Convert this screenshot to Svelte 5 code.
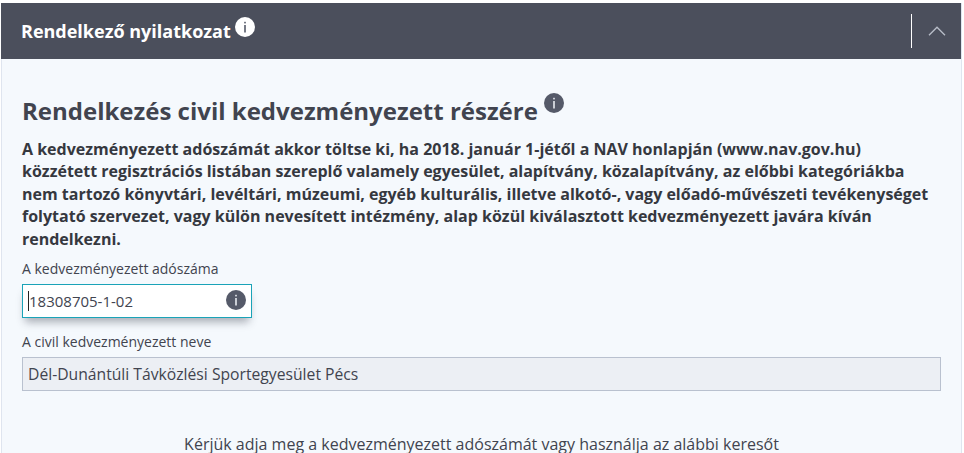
<script>
	const intro =
		'A kedvezményezett adószámát akkor töltse ki, ha 2018. január 1-jétől a NAV honlapján (www.nav.gov.hu) közzétett regisztrációs listában szereplő valamely egyesület, alapítvány, közalapítvány, az előbbi kategóriákba nem tartozó könyvtári, levéltári, múzeumi, egyéb kulturális, illetve alkotó-, vagy előadó-művészeti tevékenységet folytató szervezet, vagy külön nevesített intézmény, alap közül kiválasztott kedvezményezett javára kíván rendelkezni.';
</script>

<div class="page">
	<div class="panel">
		<header class="panel-head">
			<div class="panel-title">
				<span>Rendelkező nyilatkozat</span>
				<svg class="info head-info" viewBox="0 0 20 20" aria-hidden="true">
					<circle cx="10" cy="10" r="10" fill="#fff" />
					<rect x="9.2" y="8" width="1.6" height="7.5" fill="#555a69" />
					<rect x="9.2" y="4.8" width="1.6" height="1.6" fill="#555a69" />
				</svg>
			</div>
			<div class="toggle">
				<svg viewBox="0 0 18 10" width="18" height="10" aria-hidden="true">
					<path d="M1 9.2 9 1.2l8 8" fill="none" stroke="#b9bec9" stroke-width="1.3" />
				</svg>
			</div>
		</header>

		<div class="panel-body">
			<h2>
				<span>Rendelkezés civil kedvezményezett részére</span>
				<svg class="info" viewBox="0 0 20 20" aria-hidden="true">
					<circle cx="10" cy="10" r="10" fill="#555a69" />
					<rect x="9.2" y="8" width="1.6" height="7.5" fill="#e8ebf0" />
					<rect x="9.2" y="4.8" width="1.6" height="1.6" fill="#e8ebf0" />
				</svg>
			</h2>
			<p class="intro">{intro}</p>

			<div class="field">
				<div class="label">A kedvezményezett adószáma</div>
				<div class="input active">
					<span class="caret"></span>
					<span>18308705-1-02</span>
					<svg class="info input-info" viewBox="0 0 20 20" aria-hidden="true">
						<circle cx="10" cy="10" r="10" fill="#555a69" />
						<rect x="9.2" y="8" width="1.6" height="7.5" fill="#e8ebf0" />
						<rect x="9.2" y="4.8" width="1.6" height="1.6" fill="#e8ebf0" />
					</svg>
				</div>
			</div>

			<div class="field name-field">
				<div class="label">A civil kedvezményezett neve</div>
				<div class="input readonly">Dél-Dunántúli Távközlési Sportegyesület Pécs</div>
			</div>

			<p class="hint">Kérjük adja meg a kedvezményezett adószámát vagy használja az alábbi keresőt</p>
		</div>
	</div>
</div>

<style>
	:global(body) {
		margin: 0;
		background: #fff;
		overflow: hidden;
	}
	.page {
		width: 964px;
		height: 453px;
		padding: 3px 2px 0 1px;
		box-sizing: border-box;
		font-family: 'Open Sans', sans-serif;
		color: #41444f;
		overflow: hidden;
	}
	.panel {
		height: 100%;
		display: flex;
		flex-direction: column;
		background: #f5f9fd;
		border-right: 1px solid #dfe5ef;
	}
	.panel-head {
		flex: none;
		height: 56px;
		background: #4b4f5c;
		color: #fff;
		display: flex;
		align-items: center;
		justify-content: space-between;
	}
	.panel-title {
		display: flex;
		align-items: flex-start;
		gap: 4px;
		padding-left: 20px;
		font-size: 18px;
		font-weight: 700;
		line-height: 24px;
	}
	.info {
		flex: none;
		width: 20px;
		height: 20px;
	}
	.head-info {
		margin-top: -2px;
	}
	.toggle {
		height: 34px;
		width: 50px;
		border-left: 1px solid #fff;
		display: flex;
		align-items: center;
		justify-content: center;
		box-sizing: border-box;
	}
	.panel-body {
		flex: 1;
		padding: 0 20px;
		border-left: 1px solid #dfe5ef;
	}
	h2 {
		margin: 36px 0 0;
		display: flex;
		align-items: flex-start;
		gap: 6px;
		font-size: 24px;
		font-weight: 700;
		line-height: 32px;
	}
	h2 .info {
		margin-top: -2px;
	}
	.intro {
		margin: 11px 10px 0 0;
		font-size: 16px;
		font-weight: 700;
		line-height: 22.4px;
		color: #35383f;
	}
	.field {
		margin-top: 9px;
	}
	.name-field {
		margin-top: 14px;
	}
	.label {
		font-size: 14px;
		line-height: 20px;
		margin-bottom: 5px;
	}
	.input {
		height: 34px;
		box-sizing: border-box;
		display: flex;
		align-items: center;
		padding: 0 5px;
		font-size: 15.7px;
		position: relative;
	}
	.active {
		width: 230px;
		font-size: 15px;
		background: #fff;
		border: 1px solid #1aa3b8;
		box-shadow: 0 7px 9px -3px rgba(50, 55, 70, 0.4);
	}
	.caret {
		width: 1px;
		height: 20px;
		background: #222;
	}
	.input-info {
		position: absolute;
		right: 5px;
		top: 5px;
	}
	.readonly {
		background: #eceff4;
		border: 1px solid #b9c1cf;
	}
	.hint {
		margin: 44px 0 0;
		text-align: center;
		font-size: 16px;
		line-height: 18px;
	}
</style>
